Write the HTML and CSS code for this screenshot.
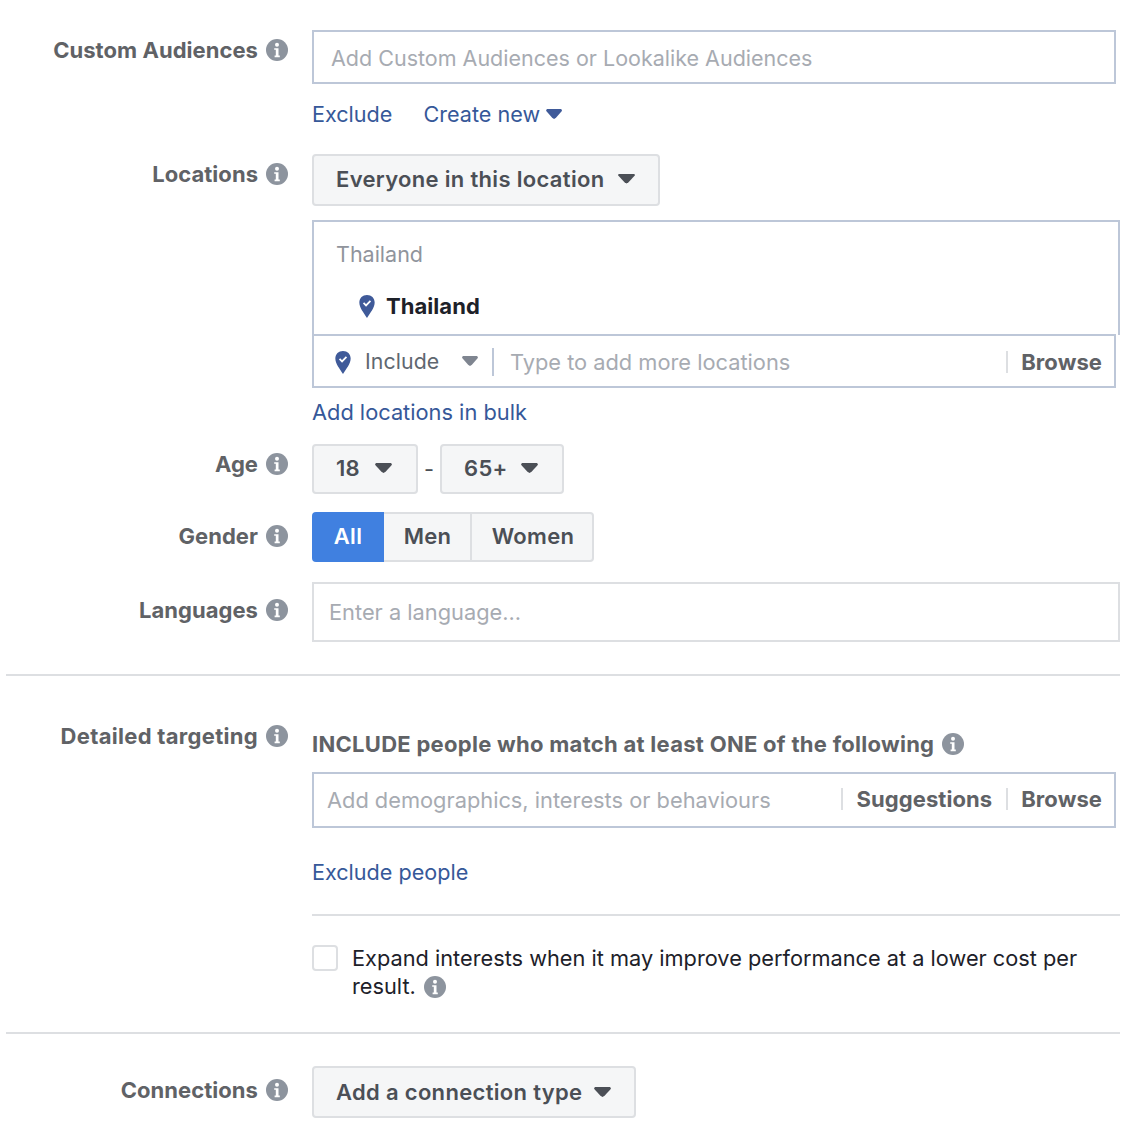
FILE: index.html
```html
<!DOCTYPE html>
<html lang="en">
<head>
    <title>Audience</title>
    <link rel="stylesheet" href="styles.css">
</head>
<body>
    <svg class="defs" width="0" height="0">
        <symbol id="info" viewBox="0 0 22 22">
            <circle cx="11" cy="11" r="11" fill="#8d949e"/>
            <circle cx="11" cy="5.8" r="2" fill="#fff"/>
            <path d="M8.2 9.2h4.3v7.4h1.3v1.6H8.6v-1.6h1.2v-5.8H8.2z" fill="#fff"/>
        </symbol>
        <symbol id="pin" viewBox="0 0 16 24">
            <path d="M8 0c4.6 0 8 3.3 8 7.8 0 5.400-4.800 11.200-8 16.200C4.800 19 0 13.200 0 7.800 0 3.300 3.400 0 8 0z" fill="#3f5a99"/>
            <path d="M4.400 8.300l2.600 2.600 4.600-4.800" fill="none" stroke="#fff" stroke-width="1.800"/>
        </symbol>
    </svg>

    <div class="page">
        <section class="row row-audiences">
            <div class="label">Custom Audiences <svg class="info"><use href="#info"/></svg></div>
            <div class="field">
                <div class="input input-audiences">Add Custom Audiences or Lookalike Audiences</div>
                <div class="links">
                    <a class="link">Exclude</a>
                    <a class="link">Create new <i class="caret caret-link"></i></a>
                </div>
            </div>
        </section>

        <section class="row row-locations">
            <div class="label">Locations <svg class="info"><use href="#info"/></svg></div>
            <div class="field">
                <button class="btn btn-location">Everyone in this location <i class="caret"></i></button>
                <div class="location-box">
                    <div class="location-group">Thailand</div>
                    <div class="location-item">
                        <svg class="pin"><use href="#pin"/></svg>
                        <strong>Thailand</strong>
                    </div>
                </div>
                <div class="location-search">
                    <svg class="pin pin-search"><use href="#pin"/></svg>
                    <span class="include">Include</span>
                    <i class="caret caret-grey"></i>
                    <span class="placeholder">Type to add more locations</span>
                    <span class="action action-browse">Browse</span>
                </div>
                <a class="link link-bulk">Add locations in bulk</a>
            </div>
        </section>

        <section class="row row-age">
            <div class="label">Age <svg class="info"><use href="#info"/></svg></div>
            <div class="field field-inline">
                <button class="btn btn-age">18 <i class="caret"></i></button>
                <span class="dash">-</span>
                <button class="btn btn-age">65+ <i class="caret"></i></button>
            </div>
        </section>

        <section class="row row-gender">
            <div class="label">Gender <svg class="info"><use href="#info"/></svg></div>
            <div class="field">
                <div class="segments">
                    <button class="segment segment-all">All</button>
                    <button class="segment segment-men">Men</button>
                    <button class="segment segment-women">Women</button>
                </div>
            </div>
        </section>

        <section class="row row-languages">
            <div class="label">Languages <svg class="info"><use href="#info"/></svg></div>
            <div class="field">
                <div class="input input-languages">Enter a language...</div>
            </div>
        </section>

        <hr class="rule rule-first">

        <section class="row row-detailed">
            <div class="label">Detailed targeting <svg class="info"><use href="#info"/></svg></div>
            <div class="field">
                <div class="include-title">INCLUDE people who match at least ONE of the following <svg class="info"><use href="#info"/></svg></div>
                <div class="input input-detailed">
                    <span class="placeholder">Add demographics, interests or behaviours</span>
                    <span class="action action-suggestions">Suggestions</span>
                    <span class="action action-last">Browse</span>
                </div>
                <a class="link link-exclude">Exclude people</a>
                <hr class="rule rule-inner">
                <label class="expand">
                    <span class="checkbox"></span>
                    <span class="expand-text">Expand interests when it may improve performance at a lower cost per result. <svg class="info"><use href="#info"/></svg></span>
                </label>
            </div>
        </section>

        <hr class="rule rule-last">

        <section class="row row-connections">
            <div class="label">Connections <svg class="info"><use href="#info"/></svg></div>
            <div class="field">
                <button class="btn btn-connection">Add a connection type <i class="caret"></i></button>
            </div>
        </section>
    </div>
</body>
</html>
```

FILE: styles.css
```css
* {
    box-sizing: border-box;
}
body {
    margin: 0;
    background: #fff;
    color: #1d2129;
    font-family: Inter, "Liberation Sans", sans-serif;
    font-size: 21.8px;
}
.defs {
    position: absolute;
}
.page {
    width: 1148px;
    height: 1138px;
    padding: 30px 28px 0 6px;
    overflow: hidden;
}
.row {
    display: grid;
    grid-template-columns: 306px 1fr;
}
.label {
    display: flex;
    justify-content: flex-end;
    align-items: center;
    align-self: start;
    gap: 8px;
    height: 22px;
    margin-top: 9px;
    padding-right: 24px;
    color: #606266;
    font-size: 22px;
    font-weight: 700;
    letter-spacing: 0.05px;
    white-space: nowrap;
}
.info {
    flex: none;
    width: 22px;
    height: 22px;
}
.field {
    min-width: 0;
}
.field-inline {
    display: flex;
    align-items: center;
}

/* text inputs */
.input {
    color: #a7abb2;
    background: #fff;
}
.input-audiences {
    width: 804px;
    height: 54px;
    padding: 0 17px;
    border: 2px solid #bdc7d8;
    font-size: 21.5px;
    line-height: 52px;
}
.input-languages {
    height: 60px;
    padding: 0 15px 2px;
    border: 2px solid #dddfe2;
    line-height: 56px;
}
.input-detailed {
    display: flex;
    align-items: center;
    width: 804px;
    height: 56px;
    padding: 0 12px 0 13px;
    border: 2px solid #bdc7d8;
}
.placeholder {
    color: #a7abb2;
}

/* links */
.link {
    display: block;
    color: #365899;
    font-size: 21.6px;
    white-space: nowrap;
}
.links {
    display: flex;
    gap: 31px;
    height: 26px;
    margin-top: 17px;
    line-height: 26px;
}
.links .link {
    display: flex;
    align-items: center;
    gap: 6px;
}
.link-bulk {
    height: 26px;
    margin-top: 11px;
    font-size: 21.8px;
    line-height: 26px;
}
.link-exclude {
    height: 26px;
    margin-top: 31px;
    line-height: 26px;
}

/* buttons */
.btn {
    display: inline-flex;
    align-items: center;
    justify-content: space-between;
    padding: 0 23px 0 22px;
    border: 2px solid #dddfe2;
    border-radius: 4px;
    background: #f5f6f7;
    color: #4b4f56;
    font-family: inherit;
    font-size: 22px;
    font-weight: 600;
    letter-spacing: 0.32px;
    white-space: nowrap;
}
.btn-location {
    width: 348px;
    height: 52px;
    padding-bottom: 3px;
}
.btn-age {
    height: 50px;
    padding: 0 24px 2px 22px;
}
.btn-age:first-child {
    width: 106px;
}
.btn-age:last-child {
    width: 124px;
}
.btn-connection {
    width: 324px;
    height: 52px;
}
.caret {
    display: inline-block;
    width: 17px;
    height: 10px;
    background: #4b4f56;
    clip-path: polygon(5% 0, 95% 0, 100% 18%, 62% 88%, 50% 100%, 38% 88%, 0 18%);
}
.caret-link {
    width: 16px;
    background: #3f5a99;
}
.caret-grey {
    width: 16px;
    background: #7f8590;
}
.dash {
    width: 22px;
    color: #4b4f56;
    text-align: center;
}

/* locations */
.row-locations {
    margin-top: 27px;
}
.location-box {
    width: 808px;
    height: 115px;
    margin-top: 14px;
    padding: 19px 22px 0;
    border: 2px solid #bdc7d8;
    border-bottom: 0;
}
.location-group {
    height: 26px;
    color: #90949c;
    font-size: 21.5px;
    line-height: 26px;
}
.location-item {
    display: flex;
    align-items: center;
    gap: 11px;
    margin-top: 26px;
    padding-left: 23px;
    font-size: 22px;
    line-height: 26px;
}
.location-item strong {
    font-weight: 700;
    letter-spacing: 0.05px;
}
.pin {
    flex: none;
    width: 16px;
    height: 23px;
}
.location-search {
    display: flex;
    align-items: center;
    width: 804px;
    height: 54px;
    margin-top: -1px;
    padding: 0 12px 0 21px;
    border: 2px solid #bdc7d8;
}
.pin-search {
    margin-top: 3px;
}
.include {
    width: 97px;
    margin-left: 14px;
    color: #606770;
    font-size: 21.3px;
    letter-spacing: 0.1px;
}
.location-search .placeholder {
    margin-top: 2px;
    margin-left: 14px;
    padding-left: 16px;
    border-left: 2px solid #bdc7d8;
    line-height: 28px;
}
.action {
    padding-left: 13px;
    border-left: 2px solid #dddfe2;
    color: #606266;
    font-size: 22px;
    font-weight: 700;
    letter-spacing: 0.08px;
    line-height: 22px;
}
.action-browse {
    margin-top: 1px;
    margin-left: auto;
}
.action-suggestions {
    margin-bottom: 2px;
    margin-left: auto;
    margin-right: 14px;
}
.action-last {
    margin-bottom: 2px;
}

/* age and gender */
.row-age {
    margin-top: 19px;
}
.row-age .label {
    margin-top: 9px;
}
.row-gender {
    margin-top: 18px;
}
.row-gender .label {
    margin-top: 13px;
}
.segments {
    display: flex;
    height: 50px;
}
.segment {
    padding: 0 0 2px;
    border: 2px solid #dddfe2;
    border-left: 0;
    background: #f5f6f7;
    color: #4b4f56;
    font-family: inherit;
    font-size: 22px;
    font-weight: 600;
    letter-spacing: 0.32px;
}
.segment-all {
    width: 72px;
    border: 0;
    border-radius: 4px 0 0 4px;
    background: #4080e0;
    color: #fff;
}
.segment-men {
    width: 88px;
    padding-left: 1px;
}
.segment-women {
    width: 122px;
    padding-left: 2px;
    border-radius: 0 4px 4px 0;
}
.row-languages {
    margin-top: 20px;
}
.row-languages .label {
    margin-top: 17px;
}

/* rules */
.rule {
    height: 2px;
    margin: 0;
    border: 0;
    background: #dddfe2;
}
.rule-first {
    margin-top: 32px;
}
.rule-inner {
    margin-top: 29px;
}
.rule-last {
    margin-top: 32px;
}

/* detailed targeting */
.row-detailed {
    margin-top: 49px;
}
.row-detailed .label {
    margin-top: 0;
    letter-spacing: 0.3px;
}
.include-title {
    display: flex;
    align-items: center;
    gap: 8px;
    height: 26px;
    margin-top: 6px;
    color: #606266;
    font-size: 22px;
    font-weight: 700;
    letter-spacing: 0.28px;
    white-space: nowrap;
}
.input-detailed {
    margin-top: 15px;
}
.expand {
    display: flex;
    gap: 14px;
    margin-top: 29px;
}
.checkbox {
    flex: none;
    width: 26px;
    height: 26px;
    border: 2px solid #dddfe2;
    border-radius: 4px;
}
.expand-text {
    margin-top: -1px;
    font-size: 21.75px;
    line-height: 28px;
}
.expand-text .info {
    vertical-align: -4px;
    margin-left: 2px;
}
.row-connections {
    margin-top: 32px;
}
.row-connections .label {
    margin-top: 13px;
}
```
